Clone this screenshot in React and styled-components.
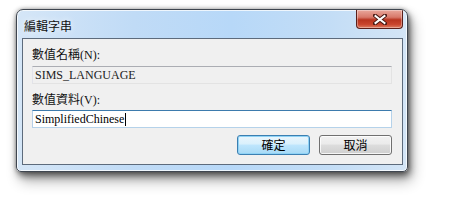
import React from "react";
import styled, { createGlobalStyle } from "styled-components";

const Global = createGlobalStyle`
  html, body { margin: 0; padding: 0; background: #ffffff; }
  body { font-family: "Liberation Serif", "Noto Sans CJK TC", serif; font-size: 12px; color: #000; }
`;

const Page = styled.div`
  width: 463px;
  height: 217px;
  padding: 9px 0 0 16px;
  box-sizing: border-box;
`;

const Frame = styled.div`
  width: 392px;
  height: 163px;
  box-sizing: border-box;
  border: 1px solid #3f4650;
  border-radius: 7px 7px 5px 5px;
  background: linear-gradient(90deg, #d5e6f7 0%, #c0dbf6 30%, #b7d8f8 55%, #c3ddf6 80%, #d4e5f6 100%);
  box-shadow: 0 0 4px rgba(0,0,0,0.35), 2px 4px 7px rgba(0,0,0,0.5), 4px 9px 14px rgba(0,0,0,0.3), inset 0 0 0 1px rgba(255,255,255,0.75);
  display: flex;
  flex-direction: column;
  padding: 0 4px 6px 5px;
  overflow: hidden;
`;

const TitleBar = styled.div`
  height: 28px;
  display: flex;
  align-items: flex-start;
  justify-content: space-between;
  flex: none;
`;

const Title = styled.div`
  font-family: "Noto Sans CJK TC", sans-serif;
  font-size: 12px;
  line-height: 14px;
  margin: 9px 0 0 2px;
  color: #111;
  text-shadow: 0 0 6px rgba(255,255,255,0.9);
`;

const CloseButton = styled.div`
  width: 47px;
  height: 19px;
  box-sizing: border-box;
  border: 1px solid #5a1f1a;
  border-top: none;
  border-radius: 0 0 4px 4px;
  background: linear-gradient(180deg, #e9a89c 0%, #d8796a 40%, #b8341f 55%, #c9452d 80%, #dd7d62 100%);
  box-shadow: inset 0 0 0 1px rgba(255,255,255,0.35);
  display: flex;
  align-items: center;
  justify-content: center;
`;

const Client = styled.div`
  flex: 1;
  background: #f0f0f0;
  border: 1px solid #5d6b7c;
  display: flex;
  flex-direction: column;
  padding: 8px 10px 9px 9px;
`;

const Label = styled.div`
  font-family: "Noto Sans CJK TC", sans-serif;
  font-size: 12px;
  line-height: 14px;
  color: #111;
  span { font-family: "Liberation Serif", serif; }
`;

const Field = styled.div`
  height: 18px;
  box-sizing: border-box;
  margin-top: ${p => p.$top}px;
  margin-bottom: ${p => p.$bottom}px;
  background: ${p => (p.$active ? "#ffffff" : "#f0f0f0")};
  border: 1px solid ${p => (p.$active ? "#b5d2ea" : "#e3e3e3")};
  border-top-color: ${p => (p.$active ? "#3d7bad" : "#abadb3")};
  border-left-color: ${p => (p.$active ? "#b5cfe7" : "#e2e3ea")};
  padding: 0 2px;
  font-family: "Liberation Serif", serif;
  font-size: 12px;
  line-height: 16px;
  color: ${p => (p.$active ? "#000" : "#222")};
  display: flex;
  align-items: center;
  white-space: nowrap;
`;

const Caret = styled.span`
  display: inline-block;
  width: 1px;
  height: 13px;
  background: #000;
  margin-left: 1px;
`;

const ButtonRow = styled.div`
  display: flex;
  justify-content: flex-end;
  gap: 9px;
  margin-top: auto;
`;

const Button = styled.div`
  width: 73px;
  height: 20px;
  box-sizing: border-box;
  border-radius: 3px;
  border: 1px solid ${p => (p.$default ? "#3c7fb1" : "#707070")};
  background: ${p =>
    p.$default
      ? "linear-gradient(180deg, #eaf6fd 0%, #d9f0fc 45%, #bee6fd 50%, #a7d9f5 100%)"
      : "linear-gradient(180deg, #f2f2f2 0%, #ebebeb 45%, #dddddd 50%, #cfcfcf 100%)"};
  box-shadow: inset 0 0 0 1px ${p => (p.$default ? "#8fd3f6" : "rgba(255,255,255,0.8)")};
  font-family: "Noto Sans CJK TC", sans-serif;
  font-size: 12px;
  line-height: 16px;
  color: #000;
  display: flex;
  align-items: center;
  justify-content: center;
`;

export default function App() {
  return (
    <>
      <Global />
      <Page>
        <Frame>
          <TitleBar>
            <Title>編輯字串</Title>
            <CloseButton>
              <svg width="14" height="11" viewBox="0 0 14 11">
                <path d="M2 1.5 L12 9.5 M12 1.5 L2 9.5" stroke="#4a1a14" strokeWidth="4" strokeLinecap="square" />
                <path d="M2.5 2 L11.5 9 M11.5 2 L2.5 9" stroke="#ffffff" strokeWidth="2" strokeLinecap="square" />
              </svg>
            </CloseButton>
          </TitleBar>
          <Client>
            <Label>數值名稱<span>(N):</span></Label>
            <Field $top={4} $bottom={8}>SIMS_LANGUAGE</Field>
            <Label>數值資料<span>(V):</span></Label>
            <Field $active $top={3} $bottom={0}>SimplifiedChinese<Caret /></Field>
            <ButtonRow>
              <Button $default>確定</Button>
              <Button>取消</Button>
            </ButtonRow>
          </Client>
        </Frame>
      </Page>
    </>
  );
}
